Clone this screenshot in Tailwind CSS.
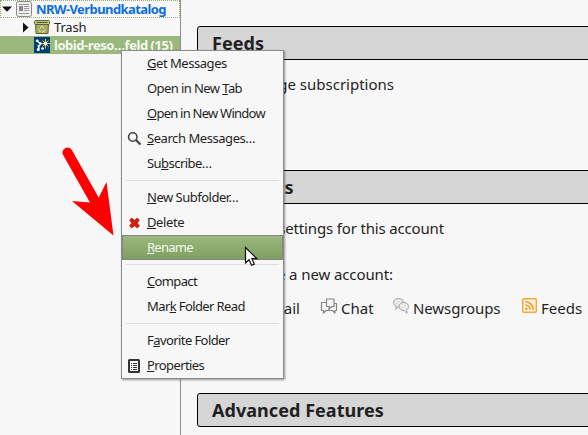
<!DOCTYPE html>
<html lang="en">
<head>
<meta charset="utf-8">
<title>NRW-Verbundkatalog</title>
<script src="https://cdn.jsdelivr.net/npm/@tailwindcss/browser@4"></script>
</head>
<body class="relative flex h-[435px] w-[588px] overflow-hidden bg-[#f7f7f7] font-['Noto_Sans',sans-serif] text-[#1f1f1f]">

<!-- Folder tree -->
<aside class="h-full w-[181px] shrink-0 border-r border-[#8f8f8f] text-[13px] leading-[18px] whitespace-nowrap">
  <div class="flex h-[18px] items-center border border-dotted border-[#8fae70] font-bold text-[#0b6fde]">
    <svg class="ml-px size-[10px] shrink-0" viewBox="0 0 10 10"><path d="M0 2.500h10L5 7.800z" fill="#111"/></svg>
    <svg class="ml-1 size-4 shrink-0" viewBox="0 0 16 16"><rect x=".5" y=".5" width="15" height="15" rx="2" fill="#eee" stroke="#8b8b8b"/><path d="M3 3.500h10" stroke="#999"/><path d="M3 5h4v5H3z" fill="#888"/><path d="M8 5.500h5M8 7.500h5M8 9.500h5M3 12.500h10" stroke="#999"/></svg>
    <span class="ml-1 tracking-[-0.58px]">NRW-Verbundkatalog</span>
  </div>
  <div class="flex h-[18px] items-center pl-[23px]">
    <svg class="h-[11px] w-[6px] shrink-0" viewBox="0 0 6 11"><path d="M0 .5v10l5.500-5z" fill="#111"/></svg>
    <svg class="ml-[5px] size-4 shrink-0" viewBox="0 0 16 16"><path d="M1.500 5h13l-.5 9.500H2z" fill="#a7ad62" stroke="#5d6630"/><rect x=".5" y="1.500" width="15" height="4" rx="1" fill="#c3c88c" stroke="#5d6630"/><path d="M2.500 3.500h11" stroke="#4d5526"/><path d="M5.800 9.200 8 7l2 2M10.800 10.500 9.500 13H7.800M6.500 13 5 10.600" fill="none" stroke="#e5e9c2"/></svg>
    <span class="ml-1 tracking-[-0.2px]">Trash</span>
  </div>
  <div class="flex h-[18px] items-center bg-[#9ab87c] pl-[34px] font-bold text-[#f6f8f2]">
    <svg class="size-4 shrink-0" viewBox="0 0 16 16"><path d="M0 0h16v16H0z" fill="#003f73"/><path d="M3 4 6.500 6.500 4 12.500M6.500 6.500l4.500 0M4 8l1 4" fill="none" stroke="#fff" stroke-width="1.200"/><g fill="#fff"><circle cx="3.200" cy="3.800" r="1.400"/><circle cx="6.500" cy="6.500" r="1.200"/><circle cx="4.300" cy="12.500" r="1.500"/><circle cx="8.600" cy="11.500" r="1.300"/></g><path d="M11.500 2v9.500M7.500 6.500h8.500M8.500 3.500l6 6M14.500 3.500l-6 6" stroke="#e8c640"/><circle cx="11.500" cy="6.500" r="1.900" fill="#fffbe0"/></svg>
    <span class="ml-1 tracking-[-0.45px]">lobid-reso…feld (15)</span>
  </div>
</aside>

<!-- Account overview -->
<main class="w-[407px] shrink-0 overflow-hidden pt-[26px] pl-4 text-[15px] leading-5 whitespace-nowrap">
  <h2 class="flex h-[34px] w-[420px] items-center rounded-[3px] border border-black bg-[#d6d6d6] pl-[14px] text-[18px] font-bold tracking-[0.05px]">Feeds</h2>
  <p class="mt-[14px] flex w-[197px] justify-end">Manage subscriptions</p>
  <h2 class="mt-[76px] flex h-[34px] w-[420px] items-center rounded-[3px] border border-black bg-[#d6d6d6] pl-[14px] text-[18px] font-bold tracking-[-0.15px]">Accounts</h2>
  <p class="mt-[14px] flex w-[247px] justify-end tracking-[-0.16px]">View settings for this account</p>
  <p class="mt-[26px] flex w-[196px] justify-end tracking-[-0.1px]">Create a new account:</p>
  <div class="mt-[14px] flex h-5">
    <span class="flex w-[103px] justify-end">Email</span>
    <svg class="-mt-px ml-5 h-[18px] w-[18px] shrink-0" viewBox="0 0 18 18"><g fill="#f7f7f7" stroke="#858585" stroke-width="1.200" stroke-linejoin="round"><path d="M1.500 5.500h8v8H6l-2.500 2.500v-2.500h-2z"/><path d="M12 6.500h4.500v7H15V16l-2.500-2.500H9v-3"/><path d="M6.500 2h7.500v7.500h-2l-2.500 2v-2h-3z"/></g></svg>
    <span class="ml-[3px] w-[51px]">Chat</span>
    <svg class="-mt-px size-[18px] shrink-0" viewBox="0 0 18 18"><g stroke="#a2a2a2" fill="#e8e8e8"><path d="M6.500 1.500c3 0 5 1.700 5 4s-2 4-5 4l-2.500 3V9C2.300 8.300 1.500 7 1.500 5.500c0-2.300 2-4 5-4z"/><path d="M11.700 5.500c2.800 0 4.800 1.700 4.800 4 0 1.500-.6 2.500-1.800 3.300l.3 3.700-3-3c-3 0-5-1.700-5-4s2-4 4.700-4z"/></g></svg>
    <span class="ml-[3px] w-[109px] tracking-[-0.1px]">Newsgroups</span>
    <svg class="mt-0 size-[15px] shrink-0" viewBox="0 0 16 16"><rect x=".75" y=".75" width="14.500" height="14.500" rx="1.500" fill="#fff5e5" stroke="#f9a52b" stroke-width="1.500"/><circle cx="4.500" cy="11.500" r="1.300" fill="#f7941d"/><path d="M3.500 7.500a5 5 0 0 1 5 5M3.500 4a8.500 8.500 0 0 1 8.500 8.500" fill="none" stroke="#f7941d" stroke-width="1.700"/></svg>
    <span class="ml-1">Feeds</span>
  </div>
  <h2 class="mt-[75px] flex h-[34px] w-[420px] items-center rounded-[3px] border border-black bg-[#d6d6d6] pl-[14px] text-[18px] font-bold tracking-[0.05px]">Advanced Features</h2>
</main>

<!-- Context menu -->
<div class="absolute top-[50px] left-[121px] w-[163px] border border-[#8c8c8c] bg-[#f7f7f7] text-[13px] whitespace-nowrap shadow-[1px_1px_2px_rgba(0,0,0,0.4)]">
  <div class="flex h-[25px] items-center pl-[25px] tracking-[-0.46px]"><span><u>G</u>et Messages</span></div>
  <div class="flex h-[25px] items-center pl-[25px] tracking-[-0.58px]"><span>Open in New <u>T</u>ab</span></div>
  <div class="flex h-[25px] items-center pl-[25px] tracking-[-0.76px]"><span><u>O</u>pen in New Window</span></div>
  <div class="flex h-[25px] items-center pl-[5px] tracking-[-0.44px]"><svg class="mr-1 size-4" viewBox="0 0 16 16"><circle cx="5.800" cy="6" r="4.200" fill="none" stroke="#444" stroke-width="1.600"/><path d="m9 9 4.500 4.500" stroke="#444" stroke-width="2.200"/></svg><span><u>S</u>earch Messages…</span></div>
  <div class="flex h-[25px] items-center pl-[25px] tracking-[-0.55px]"><span>Su<u>b</u>scribe…</span></div>
  <div class="mx-1 my-1 h-px bg-[#dedede]"></div>
  <div class="flex h-[25px] items-center pl-[25px] tracking-[-0.5px]"><span><u>N</u>ew Subfolder…</span></div>
  <div class="flex h-[25px] items-center pl-[5px] tracking-[-0.4px]"><svg class="mr-1 size-4" viewBox="0 0 16 16"><path d="m2.500 5 2.300-2L7.500 5.300 10.200 3l2.300 2-2.200 3 2.200 3-2.300 2-2.700-2.300L4.800 13l-2.300-2 2.200-3z" fill="#cf210d" stroke="#a91808" stroke-width=".6"/></svg><span><u>D</u>elete</span></div>
  <div class="flex h-[25px] items-center border border-[#858585] bg-linear-to-b from-[#9ab87c] to-[#809f61] pl-[24px] tracking-[-0.75px] text-[#f4f8ee]"><span><u>R</u>ename</span></div>
  <div class="mx-1 my-1 h-px bg-[#dedede]"></div>
  <div class="flex h-[25px] items-center pl-[25px] tracking-[-0.65px]"><span><u>C</u>ompact</span></div>
  <div class="flex h-[25px] items-center pl-[25px] tracking-[-0.6px]"><span>Mar<u>k</u> Folder Read</span></div>
  <div class="mx-1 my-1 h-px bg-[#dedede]"></div>
  <div class="flex h-[25px] items-center pl-[25px] tracking-[-0.58px]"><span>F<u>a</u>vorite Folder</span></div>
  <div class="flex h-[25px] items-center pl-[5px] tracking-[-0.6px]"><svg class="mr-1 size-4" viewBox="0 0 16 16"><rect x="2" y="2" width="10" height="12" rx=".5" fill="#fff" stroke="#333" stroke-width="2"/><path d="M4 5.500h1M4 7.500h1M4 9.500h1M4 11.500h1M6 5.500h4M6 7.500h4M6 9.500h4M6 11.500h4" stroke="#333"/></svg><span><u>P</u>roperties</span></div>
</div>

<!-- Pointing arrow -->
<svg class="absolute top-[140px] left-[50px] h-[105px] w-[80px]" viewBox="0 0 80 105"><path d="M17.500 12.500 46 63" stroke="#f00" stroke-width="10" stroke-linecap="round"/><path d="M63.500 95.500 22 61l17.500 1.500 9-4.500L56.500 42z" fill="#f00"/></svg>

<!-- Mouse pointer -->
<svg class="absolute top-[246px] left-[244px] h-[22px] w-[15px]" viewBox="0 0 15 22"><path d="M1.500 1.500v15.500l3.600-3.300 2.500 5.600 2.700-1.200-2.400-5.400h5z" fill="#fff" stroke="#111" stroke-width="1.200"/></svg>
</body>
</html>
